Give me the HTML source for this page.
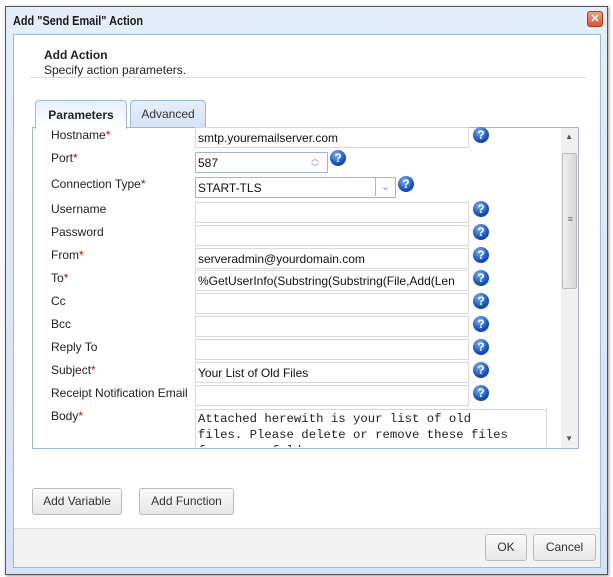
<!DOCTYPE html>
<html><head><style>
body{margin:0;width:613px;height:577px;background:#fff;font-family:"Liberation Sans",sans-serif;font-size:12px;color:#222;position:relative;overflow:hidden}
.a{position:absolute}
.dlg{left:5px;top:6px;width:601px;height:567px;border:1px solid #555;background:linear-gradient(#e4eefb,#d3e2f6);box-shadow:1px 1px 3px #999}
.inner{left:13px;top:34px;width:586px;height:532px;background:#fff;border:1px solid #9bb8dc}
.lbl{left:51px;font-size:12px}
.req{color:#d00}
.inp{left:195px;width:270px;height:19px;border:1px solid #d8d8d8;background:#fff;font-size:12px;line-height:21px;padding-left:2px;overflow:hidden;white-space:nowrap;color:#111}
.q{width:16px;height:16px;border-radius:50%;background:radial-gradient(circle at 40% 30%,#7fb1f5,#1450c0 60%,#0a2f8a);color:#fff;font-weight:bold;font-size:12px;line-height:16px;text-align:center}
.btn{border:1px solid #bbb;border-radius:3px;background:linear-gradient(#fafafa,#e6e6e6);font-size:12px;color:#333;text-align:center;line-height:25px;height:25px}
</style></head><body>
<div class="a dlg"></div>
<div class="a" style="left:13px;top:13px;font-size:13px;font-weight:bold;color:#1a1a1a;transform:scaleX(0.84);transform-origin:0 0;white-space:nowrap">Add "Send Email" Action</div>
<div class="a" style="left:587px;top:11px;width:14px;height:14px;border-radius:3px;background:linear-gradient(#f0a080,#d85a30);border:1px solid #a04020;color:#fff;font-size:11px;font-weight:bold;line-height:14px;text-align:center">✕</div>
<div class="a inner"></div>
<div class="a" style="left:44px;top:48px;font-weight:bold">Add Action</div>
<div class="a" style="left:44px;top:63px">Specify action parameters.</div>
<div class="a" style="left:30px;top:77px;width:556px;height:1px;background:#ddd"></div>
<div class="a" style="left:35px;top:100px;width:90px;height:28px;border:1px solid #9bb8dc;border-bottom:none;border-radius:4px 4px 0 0;background:linear-gradient(#e8f0fb,#fff);z-index:2;text-align:center;line-height:28px;font-weight:bold">Parameters</div>
<div class="a" style="left:130px;top:100px;width:74px;height:26px;border:1px solid #9bb8dc;border-bottom:none;border-radius:4px 4px 0 0;background:linear-gradient(#e6eef9,#d6e3f5);text-align:center;line-height:26px;color:#333">Advanced</div>
<div class="a" style="left:32px;top:127px;width:545px;height:320px;border:1px solid #9bb8dc;background:#fff;overflow:hidden">
 <div class="a" style="right:0;top:0;width:17px;height:320px;background:#f0f0f0"></div>
 <div class="a" style="right:1px;top:25px;width:15px;height:136px;background:linear-gradient(90deg,#eee,#d8d8d8);border:1px solid #bbb;border-radius:2px;box-sizing:border-box"></div>
 <div class="a" style="right:5px;top:4px;font-size:8px;color:#555">▲</div>
 <div class="a" style="right:5px;top:306px;font-size:8px;color:#555">▼</div>
 <div class="a" style="right:5px;top:86px;font-size:9px;color:#666">≡</div>
</div>
<div class="a lbl" style="top:128px">Hostname<span class="req">*</span></div>
<div class="a inp" style="top:127px">smtp.youremailserver.com</div><div class="a q" style="left:473px;top:127px">?</div>
<div class="a lbl" style="top:151px">Port<span class="req">*</span></div>
<div class="a inp" style="top:152px;width:129px;border-color:#9bb8dc">587</div>
<div class="a" style="left:311px;top:154px;font-size:8px;color:#58a;line-height:9px">︿<br>﹀</div>
<div class="a q" style="left:330px;top:150px">?</div>
<div class="a lbl" style="top:177px">Connection Type<span class="req">*</span></div>
<div class="a inp" style="top:177px;width:197px;border-color:#9bb8dc">START-TLS</div>
<div class="a" style="left:375px;top:178px;width:19px;height:18px;border-left:1px solid #9bb8dc;color:#6a9fd0;text-align:center;line-height:18px;font-size:11px">⌄</div>
<div class="a q" style="left:398px;top:176px">?</div>
<div class="a lbl" style="top:202px">Username</div><div class="a inp" style="top:202px"></div><div class="a q" style="left:473px;top:201px">?</div>
<div class="a lbl" style="top:225px">Password</div><div class="a inp" style="top:225px"></div><div class="a q" style="left:473px;top:224px">?</div>
<div class="a lbl" style="top:248px">From<span class="req">*</span></div><div class="a inp" style="top:248px">serveradmin@yourdomain.com</div><div class="a q" style="left:473px;top:247px">?</div>
<div class="a lbl" style="top:271px">To<span class="req">*</span></div><div class="a inp" style="top:270px">%GetUserInfo(Substring(Substring(File,Add(Len</div><div class="a q" style="left:473px;top:270px">?</div>
<div class="a lbl" style="top:294px">Cc</div><div class="a inp" style="top:293px"></div><div class="a q" style="left:473px;top:293px">?</div>
<div class="a lbl" style="top:317px">Bcc</div><div class="a inp" style="top:316px"></div><div class="a q" style="left:473px;top:316px">?</div>
<div class="a lbl" style="top:340px">Reply To</div><div class="a inp" style="top:339px"></div><div class="a q" style="left:473px;top:339px">?</div>
<div class="a lbl" style="top:363px">Subject<span class="req">*</span></div><div class="a inp" style="top:362px">Your List of Old Files</div><div class="a q" style="left:473px;top:362px">?</div>
<div class="a lbl" style="top:386px">Receipt Notification Email</div><div class="a inp" style="top:385px"></div><div class="a q" style="left:473px;top:385px">?</div>
<div class="a lbl" style="top:409px">Body<span class="req">*</span></div>
<div class="a" style="left:195px;top:409px;width:350px;height:37px;border:1px solid #d8d8d8;border-bottom:none;overflow:hidden">
<div style="width:320px;font-family:'Liberation Mono',monospace;font-size:12.3px;line-height:16px;padding:1px 2px">Attached herewith is your list of old files. Please delete or remove these files from your folder.</div></div>
<div class="a btn" style="left:32px;top:488px;width:88px">Add Variable</div>
<div class="a btn" style="left:139px;top:488px;width:93px">Add Function</div>
<div class="a" style="left:14px;top:528px;width:586px;height:38px;background:#f2f2f2;border-top:1px solid #ddd"></div>
<div class="a btn" style="left:485px;top:534px;width:40px">OK</div>
<div class="a btn" style="left:533px;top:534px;width:61px">Cancel</div>
</body></html>
